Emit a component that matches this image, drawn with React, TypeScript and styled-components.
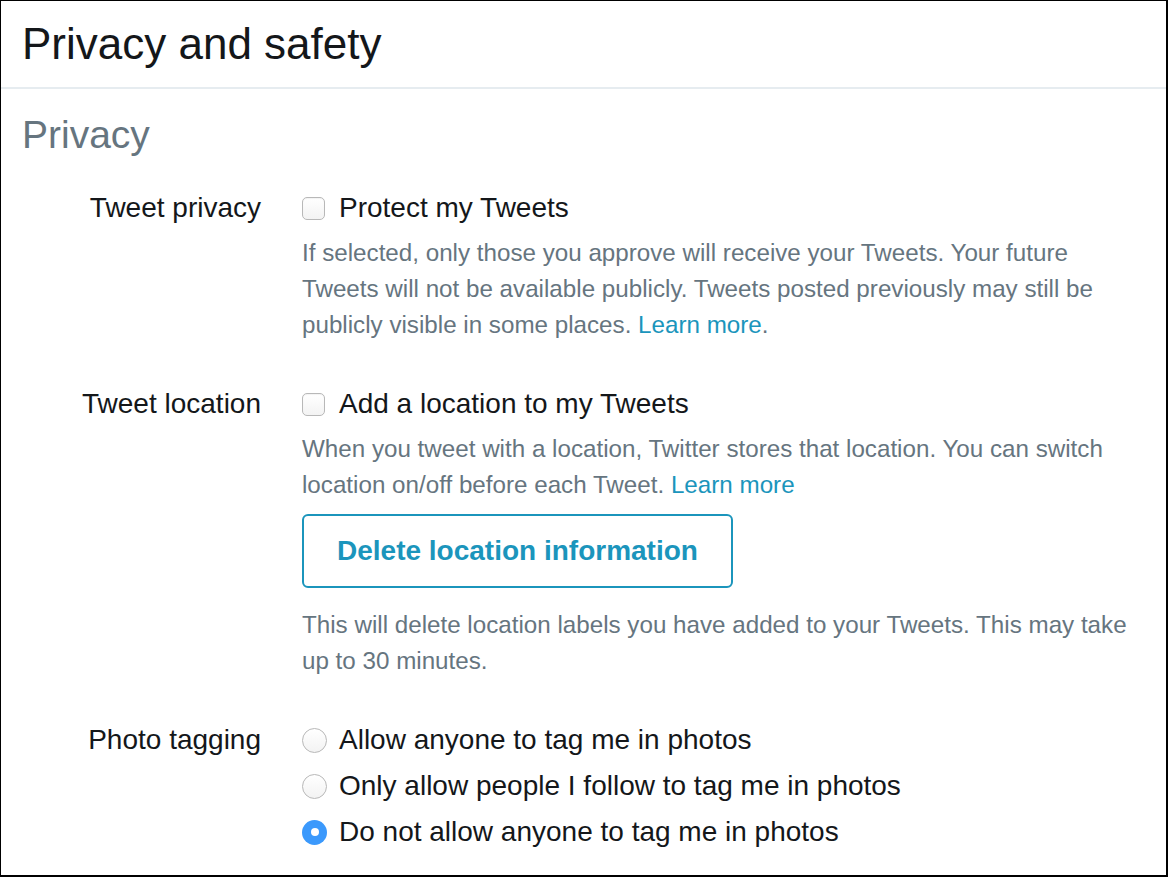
import styled, { createGlobalStyle } from "styled-components";

const GlobalStyle = createGlobalStyle`
  html, body {
    margin: 0;
    padding: 0;
    background: #ffffff;
  }
  body {
    font-family: "Liberation Sans", Arial, "Helvetica Neue", sans-serif;
    color: #14171a;
  }
`;

const Frame = styled.div`
  width: 1168px;
  height: 877px;
  box-sizing: border-box;
  border-style: solid;
  border-color: #000000;
  border-width: 1px 2px 2px 1px;
  overflow: hidden;
  background: #ffffff;
`;

const Header = styled.div`
  height: 86px;
  display: flex;
  align-items: center;
  padding: 0 21px;
  border-bottom: 2px solid #e6ecf0;
`;

const Title = styled.h1`
  margin: 0;
  font-size: 44px;
  font-weight: 400;
  color: #14171a;
  line-height: 1;
`;

const Content = styled.div`
  padding: 23px 21px 0;
`;

const SectionTitle = styled.h2`
  margin: 0 0 32px;
  font-size: 39px;
  font-weight: 400;
  line-height: 46px;
  color: #66757f;
`;

const Row = styled.div`
  display: grid;
  grid-template-columns: 239px 838px;
  column-gap: 41px;
  margin-bottom: 43px;
`;

const Label = styled.div`
  text-align: right;
  font-size: 28px;
  line-height: 36px;
  color: #14171a;
`;

const Field = styled.div`
  display: flex;
  flex-direction: column;
  align-items: flex-start;
`;

const Option = styled.label<{ $gap?: number }>`
  display: flex;
  align-items: center;
  gap: ${(p) => p.$gap ?? 14}px;
  height: 36px;
  font-size: 28px;
  color: #14171a;
  white-space: nowrap;
  cursor: pointer;
`;

const OptionList = styled.div`
  display: flex;
  flex-direction: column;
  gap: 10px;
`;

const Checkbox = styled.span`
  width: 23px;
  height: 23px;
  box-sizing: border-box;
  border: 1px solid #b8b8b8;
  border-radius: 5px;
  background: linear-gradient(#ffffff, #f3f3f3);
  box-shadow: inset 0 1px 1px rgba(0, 0, 0, 0.05);
  flex: none;
`;

const Radio = styled.span<{ $checked?: boolean }>`
  width: 25px;
  height: 25px;
  box-sizing: border-box;
  border-radius: 50%;
  flex: none;
  display: flex;
  align-items: center;
  justify-content: center;
  border: ${(p) => (p.$checked ? "none" : "1px solid #b8b8b8")};
  background: ${(p) =>
    p.$checked ? "#3b99fc" : "linear-gradient(#ffffff, #f3f3f3)"};

  &::after {
    content: "";
    display: ${(p) => (p.$checked ? "block" : "none")};
    width: 8px;
    height: 8px;
    border-radius: 50%;
    background: #ffffff;
  }
`;

const Help = styled.p<{ $top?: number }>`
  margin: ${(p) => p.$top ?? 9}px 0 0;
  font-size: 24.2px;
  line-height: 36px;
  color: #66757f;
`;

const Link = styled.a`
  color: #1b95bc;
  text-decoration: none;
`;

const OutlineButton = styled.button`
  margin-top: 11px;
  height: 74px;
  box-sizing: border-box;
  padding: 0 33px;
  border: 2px solid #1b95bc;
  border-radius: 6px;
  background: #ffffff;
  color: #1b95bc;
  font-family: "Liberation Sans", Arial, sans-serif;
  font-size: 28px;
  font-weight: 700;
  cursor: pointer;
`;

const tagOptions = [
  { text: "Allow anyone to tag me in photos", checked: false },
  { text: "Only allow people I follow to tag me in photos", checked: false },
  { text: "Do not allow anyone to tag me in photos", checked: true },
];

export default function App() {
  return (
    <>
      <GlobalStyle />
      <Frame>
        <Header>
          <Title>Privacy and safety</Title>
        </Header>
        <Content>
          <SectionTitle>Privacy</SectionTitle>

          <Row>
            <Label>Tweet privacy</Label>
            <Field>
              <Option>
                <Checkbox />
                Protect my Tweets
              </Option>
              <Help>
                If selected, only those you approve will receive your Tweets. Your
                future Tweets will not be available publicly. Tweets posted
                previously may still be publicly visible in some places.{" "}
                <Link href="#">Learn more</Link>.
              </Help>
            </Field>
          </Row>

          <Row>
            <Label>Tweet location</Label>
            <Field>
              <Option>
                <Checkbox />
                Add a location to my Tweets
              </Option>
              <Help>
                When you tweet with a location, Twitter stores that location. You
                can switch location on/off before each Tweet.{" "}
                <Link href="#">Learn more</Link>
              </Help>
              <OutlineButton>Delete location information</OutlineButton>
              <Help $top={19}>
                This will delete location labels you have added to your Tweets.
                This may take up to 30 minutes.
              </Help>
            </Field>
          </Row>

          <Row>
            <Label>Photo tagging</Label>
            <OptionList>
              {tagOptions.map((o) => (
                <Option key={o.text} $gap={12}>
                  <Radio $checked={o.checked} />
                  {o.text}
                </Option>
              ))}
            </OptionList>
          </Row>
        </Content>
      </Frame>
    </>
  );
}
